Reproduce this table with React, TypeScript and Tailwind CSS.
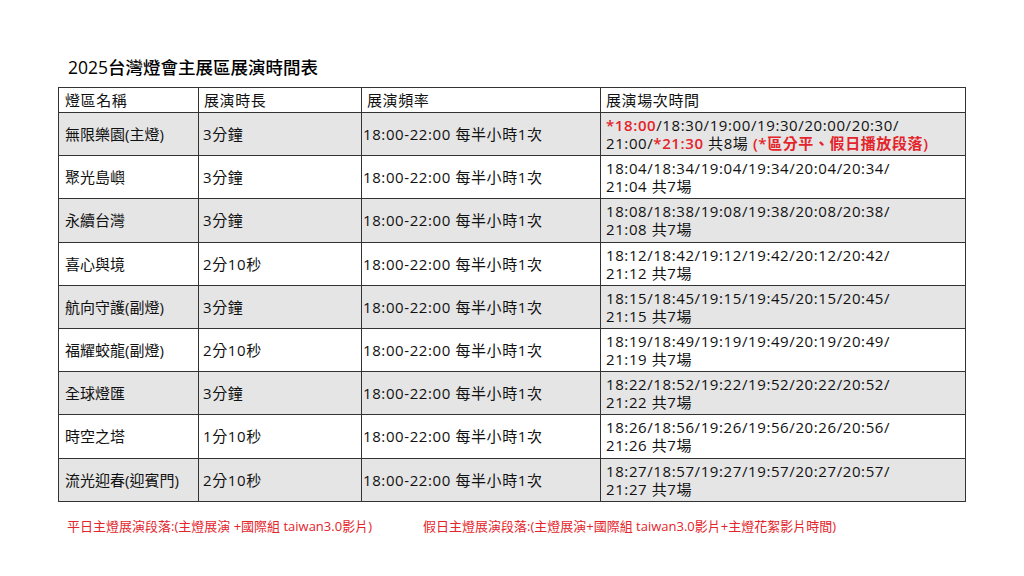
const rows = [
  { name: "無限樂園(主燈)", dur: "3分鐘", times: "", main: true },
  { name: "聚光島嶼", dur: "3分鐘", times: "18:04/18:34/19:04/19:34/20:04/20:34/|21:04 共7場" },
  { name: "永續台灣", dur: "3分鐘", times: "18:08/18:38/19:08/19:38/20:08/20:38/|21:08 共7場" },
  { name: "喜心與境", dur: "2分10秒", times: "18:12/18:42/19:12/19:42/20:12/20:42/|21:12 共7場" },
  { name: "航向守護(副燈)", dur: "3分鐘", times: "18:15/18:45/19:15/19:45/20:15/20:45/|21:15 共7場" },
  { name: "福耀蛟龍(副燈)", dur: "2分10秒", times: "18:19/18:49/19:19/19:49/20:19/20:49/|21:19 共7場" },
  { name: "全球燈匯", dur: "3分鐘", times: "18:22/18:52/19:22/19:52/20:22/20:52/|21:22 共7場" },
  { name: "時空之塔", dur: "1分10秒", times: "18:26/18:56/19:26/19:56/20:26/20:56/|21:26 共7場" },
  { name: "流光迎春(迎賓門)", dur: "2分10秒", times: "18:27/18:57/19:27/19:57/20:27/20:57/|21:27 共7場" },
];

const red = "text-[#e3242b]";

function Times({ row }: { row: (typeof rows)[number] }) {
  if (row.main) {
    return (
      <>
        <div>
          <span className={`${red} font-semibold`}>*18:00</span>/18:30/19:00/19:30/20:00/20:30/
        </div>
        <div>
          21:00/<span className={`${red} font-semibold`}>*21:30</span> 共8場{" "}
          <span className={`${red} font-semibold`}>(*區分平、假日播放段落)</span>
        </div>
      </>
    );
  }
  const [a, b] = row.times.split("|");
  return (
    <>
      <div>{a}</div>
      <div>{b}</div>
    </>
  );
}

export default function App() {
  return (
    <div
      className="w-[1024px] h-[576px] bg-white text-[#111] overflow-hidden"
      style={{ fontFamily: '"Open Sans", "Noto Sans CJK TC", sans-serif' }}
    >
      <div className="pt-[56px] pl-[68px] text-[17.5px] leading-[23px] font-medium text-black">
        2025台灣燈會主展區展演時間表
      </div>

      <table className="ml-[58px] mt-[8px] border-collapse table-fixed w-[907px] text-[15px] leading-[18px] tracking-[0.6px]">
        <colgroup>
          <col className="w-[140px]" />
          <col className="w-[163px]" />
          <col className="w-[239px]" />
          <col className="w-[365px]" />
        </colgroup>
        <thead>
          <tr className="h-[25px]">
            <th className="border border-[#333] pl-[6px] text-left font-normal">燈區名稱</th>
            <th className="border border-[#333] pl-[5px] text-left font-normal">展演時長</th>
            <th className="border border-[#333] pl-[5px] text-left font-normal">展演頻率</th>
            <th className="border border-[#333] pl-[5px] text-left font-normal">展演場次時間</th>
          </tr>
        </thead>
        <tbody>
          {rows.map((row, i) => (
            <tr key={row.name} className={`h-[43.2px] ${i % 2 === 0 ? "bg-[#e5e5e5]" : "bg-white"}`}>
              <td className="border border-[#333] pl-[6px] whitespace-nowrap tracking-normal">{row.name}</td>
              <td className="border border-[#333] pl-[4px]">{row.dur}</td>
              <td className="border border-[#333] pl-[1px] whitespace-nowrap">18:00-22:00 每半小時1次</td>
              <td className="border border-[#333] pl-[5px] whitespace-nowrap">
                <Times row={row} />
              </td>
            </tr>
          ))}
        </tbody>
      </table>

      <div className={`flex mt-[16px] text-[13px] leading-[17px] ${red}`}>
        <div className="pl-[67px] w-[423px] whitespace-nowrap">平日主燈展演段落:(主燈展演 +國際組 taiwan3.0影片)</div>
        <div className="whitespace-nowrap">假日主燈展演段落:(主燈展演+國際組 taiwan3.0影片+主燈花絮影片時間)</div>
      </div>
    </div>
  );
}
